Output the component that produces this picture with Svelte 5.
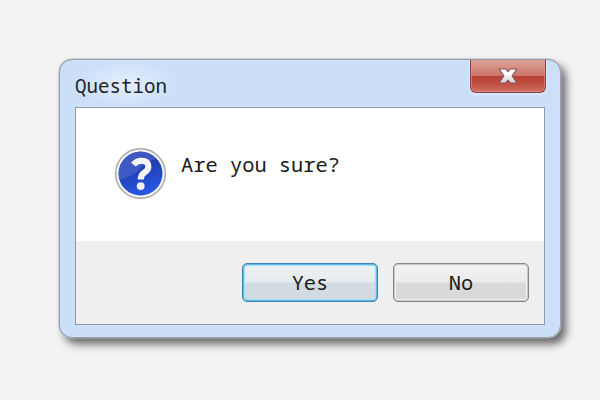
<script lang="ts">
  let open = true;

  function close() {
    open = false;
  }
</script>

<main>
  {#if open}
    <div class="window" role="dialog" aria-labelledby="title">
      <header>
        <span class="title" id="title">Question</span>
        <button class="close" aria-label="Close" on:click={close}>
          <svg width="22" height="18" viewBox="0 0 22 18">
            <defs>
              <linearGradient id="cross" x1="0" y1="0" x2="0" y2="1">
                <stop offset="0.3" stop-color="#ffffff" />
                <stop offset="1" stop-color="#cfd3d6" />
              </linearGradient>
            </defs>
            <path
              d="M2.2 2H8.6L11 4.6L13.4 2H19.8L15.1 9L20 16H13.6L11 13.2L8.4 16H2L6.9 9Z"
              fill="url(#cross)"
              stroke="#84525a"
              stroke-width="1.1"
              stroke-linejoin="round"
            />
          </svg>
        </button>
      </header>

      <div class="content">
        <div class="message">
          <svg class="icon" width="53" height="53" viewBox="0 0 54 54">
            <defs>
              <linearGradient id="disc" x1="0" y1="0" x2="0.3" y2="1">
                <stop offset="0" stop-color="#2432a2" />
                <stop offset="0.5" stop-color="#2140b8" />
                <stop offset="1" stop-color="#2756df" />
              </linearGradient>
              <linearGradient id="gloss" x1="0" y1="0" x2="1" y2="1">
                <stop offset="0" stop-color="#5872d0" />
                <stop offset="1" stop-color="#4863c8" />
              </linearGradient>
            </defs>
            <circle cx="27" cy="27" r="25.3" fill="#f5f5f5" stroke="#a9a9a9" stroke-width="1.5" />
            <circle cx="27" cy="27" r="22.4" fill="url(#disc)" />
            <path
              d="M5.7 33A22 22 0 0 1 43 12Q32 15 26 23Q18 31 5.7 33Z"
              fill="url(#gloss)"
              opacity="0.6"
            />
            <path
              d="M19.8 18Q23 14 28 14Q35 14 35 20Q35 23.4 31 26Q27.3 28.4 27.3 33"
              fill="none"
              stroke="#f5f5f7"
              stroke-width="6.2"
            />
            <circle cx="27.2" cy="39.8" r="4" fill="#f0f0f3" />
          </svg>
          <p>Are you sure?</p>
        </div>
        <footer>
          <button class="action default" on:click={close}>Yes</button>
          <button class="action" on:click={close}>No</button>
        </footer>
      </div>
    </div>
  {/if}
</main>

<style>
  :global(body) {
    background: #f3f3f3;
  }

  main {
    box-sizing: border-box;
    height: 400px;
    padding: 59px;
  }

  .window {
    box-sizing: border-box;
    width: 502px;
    height: 279px;
    padding: 0 14px 13px 15px;
    border: 1px solid #929da9;
    border-radius: 13px;
    background: #cbdff9;
    box-shadow:
      inset 0 0 0 1px #d2e1f3,
      0 0 0 0.5px #b5bcc4,
      5px 6px 8px rgba(0, 0, 0, 0.58);
  }

  header {
    display: flex;
    justify-content: space-between;
    height: 47px;
  }

  .title {
    padding: 13px 10px 0 0;
    font: 19.2px/26px "Noto Sans Mono", "DejaVu Sans Mono", monospace;
    color: #1d2228;
    background: radial-gradient(closest-side, rgba(232, 242, 254, 0.85), rgba(203, 223, 249, 0));
  }

  button {
    margin: 0;
    padding: 0;
    box-sizing: border-box;
  }

  .close {
    display: flex;
    justify-content: center;
    align-items: center;
    width: 76px;
    height: 33px;
    border: 1px solid #84434a;
    border-top: 0;
    border-radius: 0 0 6px 6px;
    background: linear-gradient(#dda39a 0%, #ca7467 49%, #b73e31 51%, #c35447 80%, #cf7465 100%);
    box-shadow:
      inset 0 0 0 1px rgba(230, 153, 140, 0.55),
      0 1px 0 1px #dae8fb;
  }

  .content {
    box-sizing: border-box;
    width: 470px;
    height: 218px;
    border: 1px solid #8f9aa8;
    background: #efefef;
    box-shadow: 0 0 0 1px #d3e0f0;
  }

  .message {
    display: flex;
    height: 133px;
    background: white;
  }

  .icon {
    margin: 39px 0 0 38px;
  }

  p {
    margin: 42px 0 0 14px;
    font: 20.4px/28px "Noto Sans Mono", "DejaVu Sans Mono", monospace;
    color: #1a1a1a;
  }

  footer {
    display: flex;
    justify-content: flex-end;
    gap: 15px;
    padding: 22px 15px;
  }

  .action {
    width: 136px;
    height: 39px;
    padding-bottom: 2px;
    border: 1px solid #858585;
    border-radius: 5px;
    background: linear-gradient(#f3f3f3 0%, #ebebeb 49%, #dadada 51%, #d8d8d8 100%);
    box-shadow:
      inset 0 0 0 1px #c9c9c9,
      inset 0 0 0 2px #f0f0f0;
    font: 20.4px/28px "Noto Sans Mono", "DejaVu Sans Mono", monospace;
    color: #1a1a1a;
  }

  .default {
    border-color: #3e84b2;
    background: linear-gradient(#edf2f5 0%, #e5eaee 49%, #d3dce3 51%, #d2dae0 100%);
    box-shadow:
      inset 0 0 0 1px #62b9e3,
      inset 0 0 0 2px #a3dff7;
  }
</style>
